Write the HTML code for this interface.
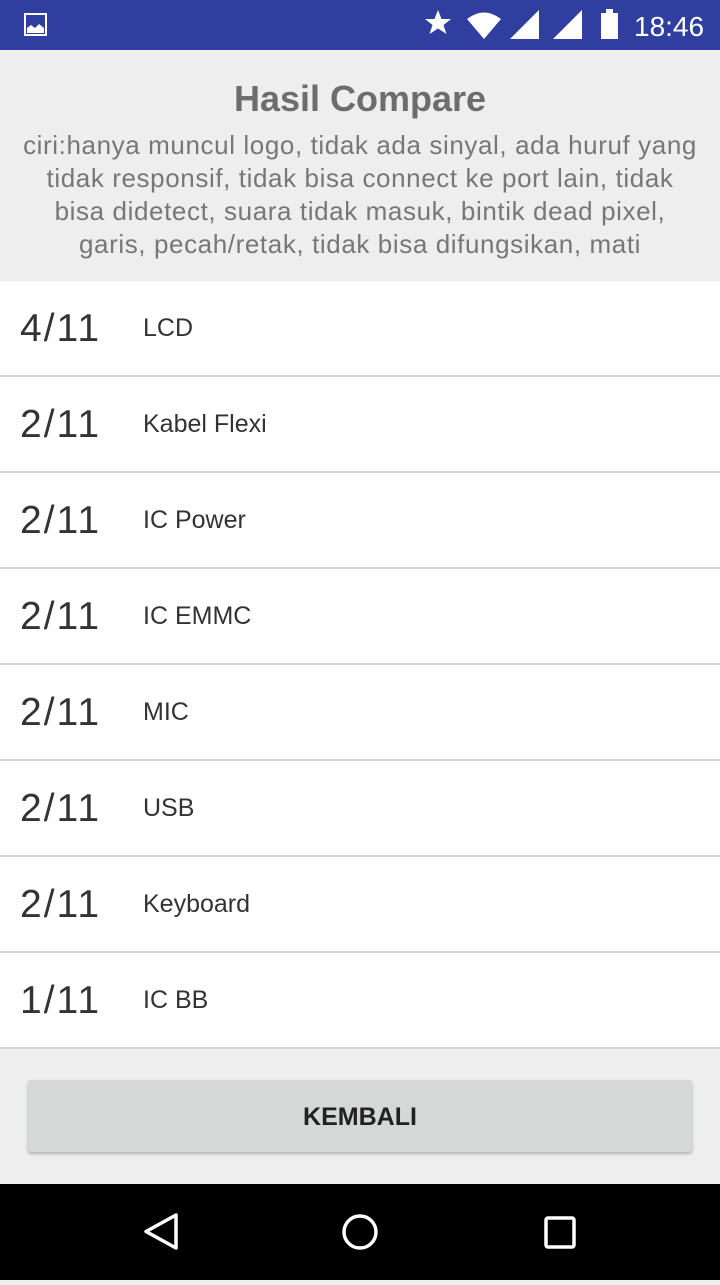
<!DOCTYPE html>
<html><head><meta charset="utf-8"><style>
*{margin:0;padding:0;box-sizing:border-box}
body{width:720px;height:1280px;background:#eeeeee;font-family:"Liberation Sans",sans-serif;position:relative;overflow:hidden}
.sb{position:absolute;top:0;left:0;width:720px;height:50px;background:#303f9f;color:#fff}
.hdr{position:absolute;top:50px;left:0;width:720px;height:231px;text-align:center}
.t{position:absolute;top:28px;width:100%;font-size:36px;font-weight:bold;color:#6d6d6d}
.s{position:absolute;top:79px;left:0;width:720px;font-size:26px;letter-spacing:.6px;line-height:33px;color:#777;white-space:nowrap}
.list{position:absolute;top:281px;left:0;width:720px;background:#fff}
.row{height:96px;border-bottom:2px solid #d4d4d4;position:relative}
.n{position:absolute;left:20px;top:26px;font-size:39px;color:#333;letter-spacing:2px}
.l{position:absolute;left:143px;top:33px;font-size:25px;color:#333}
.btn{position:absolute;left:28px;top:1080px;width:664px;height:72px;background:#d6d7d7;border-radius:3px;box-shadow:0 2px 3px rgba(0,0,0,.25);text-align:center;line-height:74px;font-size:25px;font-weight:bold;color:#222}
.nav{position:absolute;top:1184px;left:0;width:720px;height:96px;background:#000}
</style></head><body>
<div class="sb">
<svg width="720" height="50" style="position:absolute;top:0;left:0">
<rect x="25" y="14" width="21" height="21" fill="none" stroke="#fff" stroke-width="2"/>
<path d="M27 33 L27 28 L31 25 L35 28 L39 24 L44 28 L44 33Z" fill="#fff"/>
<path d="M438 10 L441.5 19 L451 19 L443.5 25 L446.5 34 L438 28.5 L429.5 34 L432.5 25 L425 19 L434.5 19Z" fill="#fff"/>
<path d="M467 19 Q484 6 501 19 L484 39Z" fill="#fff"/>
<path d="M510 39 L539 10 L539 39Z" fill="#fff"/>
<path d="M553 39 L582 10 L582 39Z" fill="#fff"/>
<rect x="601" y="13" width="17" height="26" fill="#fff"/><rect x="606" y="9" width="7" height="5" fill="#fff"/>
<text x="634" y="36" font-size="28" fill="#fff" font-family="Liberation Sans">18:46</text>
</svg></div>
<div class="hdr"><div class="t">Hasil Compare</div>
<div class="s">ciri:hanya muncul logo, tidak ada sinyal, ada huruf yang<br>tidak responsif, tidak bisa connect ke port lain, tidak<br>bisa didetect, suara tidak masuk, bintik dead pixel,<br>garis, pecah/retak, tidak bisa difungsikan, mati</div></div>
<div class="list">
<div class="row"><span class="n">4/11</span><span class="l">LCD</span></div>
<div class="row"><span class="n">2/11</span><span class="l">Kabel Flexi</span></div>
<div class="row"><span class="n">2/11</span><span class="l">IC Power</span></div>
<div class="row"><span class="n">2/11</span><span class="l">IC EMMC</span></div>
<div class="row"><span class="n">2/11</span><span class="l">MIC</span></div>
<div class="row"><span class="n">2/11</span><span class="l">USB</span></div>
<div class="row"><span class="n">2/11</span><span class="l">Keyboard</span></div>
<div class="row"><span class="n">1/11</span><span class="l">IC BB</span></div>
</div>
<div class="btn">KEMBALI</div>
<div class="nav"><svg width="720" height="96">
<path d="M176 31 L176 64 L146 47.5Z" fill="none" stroke="#fff" stroke-width="3.5" stroke-linejoin="round"/>
<circle cx="360" cy="48" r="16" fill="none" stroke="#fff" stroke-width="3.5"/>
<rect x="546" y="34" width="28" height="29" rx="2" fill="none" stroke="#fff" stroke-width="3.5"/>
</svg></div>
</body></html>
